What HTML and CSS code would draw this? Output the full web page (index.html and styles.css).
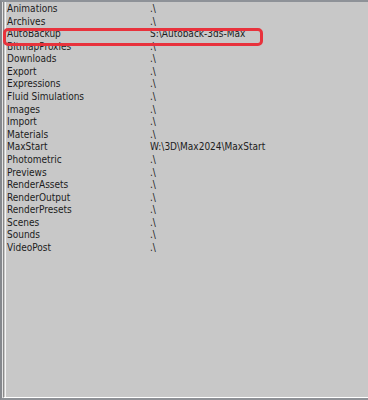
FILE: index.html
```html
<!DOCTYPE html>
<html>
<head>
<meta charset="utf-8">
<link rel="stylesheet" href="styles.css">
</head>
<body>
<div class="frame">
  <div class="inner">
    <div class="list">
      <div class="row"><span class="name">Animations</span><span class="path">.\</span></div>
      <div class="row"><span class="name">Archives</span><span class="path">.\</span></div>
      <div class="row"><span class="name">AutoBackup</span><span class="path">S:\Autoback-3ds-Max</span></div>
      <div class="row"><span class="name">BitmapProxies</span><span class="path">.\</span></div>
      <div class="row"><span class="name">Downloads</span><span class="path">.\</span></div>
      <div class="row"><span class="name">Export</span><span class="path">.\</span></div>
      <div class="row"><span class="name">Expressions</span><span class="path">.\</span></div>
      <div class="row"><span class="name">Fluid Simulations</span><span class="path">.\</span></div>
      <div class="row"><span class="name">Images</span><span class="path">.\</span></div>
      <div class="row"><span class="name">Import</span><span class="path">.\</span></div>
      <div class="row"><span class="name">Materials</span><span class="path">.\</span></div>
      <div class="row"><span class="name">MaxStart</span><span class="path">W:\3D\Max2024\MaxStart</span></div>
      <div class="row"><span class="name">Photometric</span><span class="path">.\</span></div>
      <div class="row"><span class="name">Previews</span><span class="path">.\</span></div>
      <div class="row"><span class="name">RenderAssets</span><span class="path">.\</span></div>
      <div class="row"><span class="name">RenderOutput</span><span class="path">.\</span></div>
      <div class="row"><span class="name">RenderPresets</span><span class="path">.\</span></div>
      <div class="row"><span class="name">Scenes</span><span class="path">.\</span></div>
      <div class="row"><span class="name">Sounds</span><span class="path">.\</span></div>
      <div class="row"><span class="name">VideoPost</span><span class="path">.\</span></div>
    </div>
    <div class="highlight"></div>
  </div>
</div>
</body>
</html>
```
FILE: styles.css
```css
html, body {
  margin: 0;
  padding: 0;
  background: #c8c8c8;
}
.frame {
  width: 368px;
  height: 400px;
  box-sizing: border-box;
  border-top: 2px solid #8e9298;
  border-left: 2px solid #85888d;
  border-bottom: 2px solid #8e9196;
  background: #e4e4e4;
  padding-left: 1px;
}
.inner {
  position: relative;
  height: 100%;
  box-sizing: border-box;
  border-left: 1px solid #8a8a8a;
  border-bottom: 1px solid #ffffff;
  background: #c8c8c8;
  padding-left: 1px;
}
.list {
  border-left: 1px solid #f4f4f4;
  height: 100%;
  box-sizing: border-box;
  padding-left: 1px;
  padding-top: 1px;
}
.row {
  display: grid;
  grid-template-columns: 143px 1fr;
  height: 12.58px;
  line-height: 12.58px;
  font-family: "DejaVu Sans Condensed", "DejaVu Sans", sans-serif;
  font-stretch: condensed;
  font-size: 10px;
  color: #1c1c1c;
  white-space: nowrap;
}
.highlight {
  position: absolute;
  left: -1px;
  top: 26px;
  width: 260px;
  height: 18px;
  border: 3px solid #e8323c;
  border-radius: 5px;
  box-sizing: border-box;
}
```
